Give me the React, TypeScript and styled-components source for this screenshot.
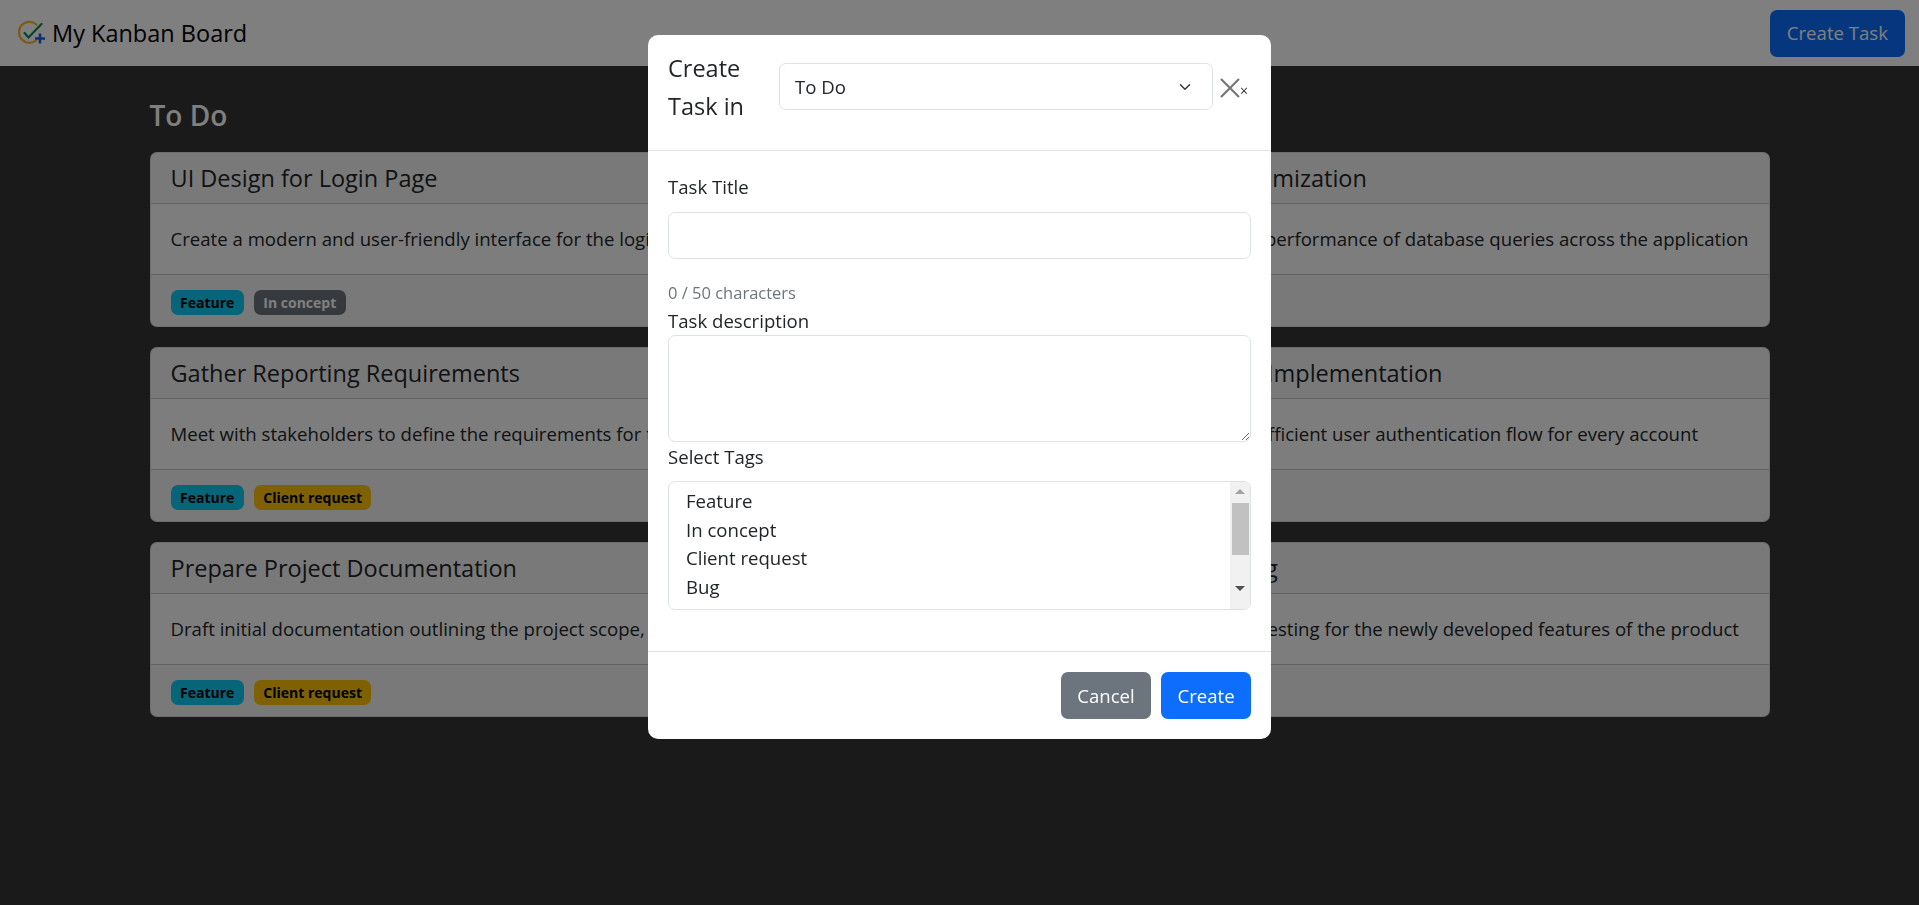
import React from "react";
import styled, { createGlobalStyle } from "styled-components";

const GlobalStyle = createGlobalStyle`
  * {
    box-sizing: border-box;
  }
  html,
  body {
    margin: 0;
    height: 100%;
    overflow: hidden;
    background: #343434;
    color: #212529;
    font-family: "Open Sans", "Noto Sans", sans-serif;
    font-size: 18.6px;
    line-height: 30px;
  }
`;

const Navbar = styled.nav`
  display: flex;
  align-items: center;
  justify-content: space-between;
  height: 66px;
  padding: 0 14px 0 17px;
  background: #fff;
`;

const Brand = styled.div`
  display: flex;
  align-items: center;
  gap: 6px;
  font-size: 23.5px;
  font-weight: 500;
  color: #000;
`;

const PrimaryButton = styled.button`
  height: 47px;
  padding: 0 17px;
  border: 0;
  border-radius: 7px;
  background: #0d6efd;
  color: #fff;
  font: inherit;
`;

const Board = styled.main`
  display: grid;
  grid-template-columns: repeat(3, 1fr);
  gap: 30px;
  width: 1620px;
  margin: 0 auto;
  padding-top: 31px;
`;

const Column = styled.section`
  display: flex;
  flex-direction: column;
  gap: 20px;
`;

const ColumnTitle = styled.h4`
  margin: 0 0 -1px;
  font-size: 28px;
  font-weight: 600;
  line-height: 36px;
  color: #fff;
`;

const Card = styled.article`
  border: 1px solid rgba(0, 0, 0, 0.125);
  border-radius: 7px;
  background: #fafafa;
  overflow: hidden;
`;

const CardHeader = styled.header`
  height: 51px;
  padding: 0 20px;
  border-bottom: 1px solid rgba(0, 0, 0, 0.175);
  background: rgba(0, 0, 0, 0.03);
`;

const CardTitle = styled.h5`
  margin: 0;
  font-size: 23.5px;
  font-weight: 500;
  line-height: 50px;
`;

const CardBody = styled.div`
  padding: 20px;
  white-space: nowrap;
  overflow: hidden;
  text-overflow: ellipsis;
`;

const CardFooter = styled.footer`
  display: flex;
  gap: 10px;
  height: 52px;
  padding-top: 15px;
  padding-left: 20px;
  border-top: 1px solid rgba(0, 0, 0, 0.175);
  background: rgba(0, 0, 0, 0.03);
`;

const badgeColors: Record<string, { bg: string; fg: string }> = {
  info: { bg: "#0dcaf0", fg: "#000" },
  secondary: { bg: "#6c757d", fg: "#fff" },
  warning: { bg: "#ffc107", fg: "#000" },
  danger: { bg: "#dc3545", fg: "#fff" },
};

const Badge = styled.span<{ $tone: string }>`
  height: 25px;
  padding: 0 9.5px;
  border-radius: 7px;
  font-size: 14px;
  font-weight: 700;
  line-height: 25px;
  background: ${(p) => badgeColors[p.$tone].bg};
  color: ${(p) => badgeColors[p.$tone].fg};
`;

const Backdrop = styled.div`
  position: fixed;
  inset: 0;
  background: rgba(0, 0, 0, 0.5);
`;

const Modal = styled.div`
  width: 623px;
  height: 704px;
  margin: 35px auto 0;
  border-radius: 10px;
  background: #fff;
  overflow: hidden;
`;

const ModalHeader = styled.div`
  display: flex;
  align-items: center;
  height: 116px;
  padding: 0 22px 12px 20px;
  border-bottom: 1px solid #dee2e6;
`;

const ModalTitle = styled.h5`
  flex: none;
  width: 111px;
  margin: 0;
  font-size: 23.5px;
  font-weight: 500;
  line-height: 38px;
`;

const ColumnSelect = styled.select`
  flex: 1;
  min-width: 0;
  height: 47px;
  padding: 0 15px;
  border: 1px solid #dee2e6;
  border-radius: 7px;
  color: #212529;
  font: inherit;
  appearance: none;
  background: #fff
    url("data:image/svg+xml,%3csvg xmlns='http://www.w3.org/2000/svg' viewBox='0 0 16 16'%3e%3cpath fill='none' stroke='%23343a40' stroke-linecap='round' stroke-linejoin='round' stroke-width='2' d='m2 5 6 6 6-6'/%3e%3c/svg%3e")
    no-repeat right 19px center / 16px 12px;
`;

const CloseButton = styled.button`
  display: flex;
  align-items: flex-end;
  flex: none;
  width: 29px;
  height: 22px;
  margin-left: 7px;
  padding: 0;
  border: 0;
  background: none;
  color: #333;
  font: 14px/14px "Open Sans", sans-serif;
`;

const ModalBody = styled.div`
  display: flex;
  flex-direction: column;
  height: 500px;
  padding: 21px 20px 0;
`;

const FieldLabel = styled.label`
  display: block;
  color: #212529;
`;

const TitleInput = styled.input`
  display: block;
  width: 100%;
  height: 47px;
  margin-top: 10px;
  border: 1px solid #dee2e6;
  border-radius: 7px;
  outline: 0;
`;

const CharCount = styled.small`
  display: block;
  margin-top: 21px;
  color: #6c757d;
  font-size: 16.5px;
  line-height: 26px;
`;

const DescriptionInput = styled.textarea`
  display: block;
  width: 100%;
  height: 107px;
  margin-top: -1px;
  border: 1px solid #dee2e6;
  border-radius: 7px;
  outline: 0;
`;

const TagBox = styled.div`
  display: flex;
  height: 129px;
  margin-top: 9px;
  border: 1px solid #dee2e6;
  border-radius: 7px;
  overflow: hidden;
`;

const TagList = styled.ul`
  flex: 1;
  margin: 0;
  padding: 5px 0 0 17px;
  list-style: none;
`;

const TagOption = styled.li`
  height: 28.6px;
  line-height: 28.6px;
`;

const Scrollbar = styled.div`
  display: flex;
  flex: none;
  flex-direction: column;
  align-items: center;
  width: 20px;
  padding-top: 21px;
  background: #f1f1f1;
`;

const ScrollArrow = styled.span<{ $down?: boolean }>`
  position: relative;
  top: ${(p) => (p.$down ? "31px" : "-14px")};
  width: 0;
  height: 0;
  margin-bottom: ${(p) => (p.$down ? "0" : "-5px")};
  border-right: 5px solid transparent;
  border-left: 5px solid transparent;
  border-top: ${(p) => (p.$down ? "5px solid #505050" : "0")};
  border-bottom: ${(p) => (p.$down ? "0" : "5px solid #a3a3a3")};
`;

const ScrollThumb = styled.div`
  flex: none;
  width: 17px;
  height: 52px;
  background: #c1c1c1;
`;

const ModalFooter = styled.div`
  display: flex;
  justify-content: flex-end;
  gap: 10px;
  padding: 20px;
  border-top: 1px solid #dee2e6;
`;

const ModalButton = styled.button<{ $primary?: boolean }>`
  width: 90px;
  height: 47px;
  border: 0;
  border-radius: 7px;
  background: ${(p) => (p.$primary ? "#0d6efd" : "#6c757d")};
  color: #fff;
  font: inherit;
`;

type Task = {
  title: string;
  description: string;
  tags: [string, string][];
};

const todo: Task[] = [
  {
    title: "UI Design for Login Page",
    description:
      "Create a modern and user-friendly interface for the login page of the application",
    tags: [
      ["Feature", "info"],
      ["In concept", "secondary"],
    ],
  },
  {
    title: "Gather Reporting Requirements",
    description:
      "Meet with stakeholders to define the requirements for the new reporting module",
    tags: [
      ["Feature", "info"],
      ["Client request", "warning"],
    ],
  },
  {
    title: "Prepare Project Documentation",
    description:
      "Draft initial documentation outlining the project scope, goals and timeline",
    tags: [
      ["Feature", "info"],
      ["Client request", "warning"],
    ],
  },
];

const done: Task[] = [
  {
    title: "Database Query Optimization",
    description:
      "Analyze and optimize the performance of database queries across the application",
    tags: [
      ["Bug", "info"],
      ["Urgent", "danger"],
    ],
  },
  {
    title: "User Authentication Implementation",
    description:
      "Implement a secure and efficient user authentication flow for every account",
    tags: [["Feature", "info"]],
  },
  {
    title: "Initial Feature Testing",
    description:
      "Conduct initial rounds of testing for the newly developed features of the product",
    tags: [
      ["Feature", "info"],
      ["Shelved", "secondary"],
    ],
  },
];

function Logo() {
  return (
    <svg width="29" height="26" viewBox="0 0 29 26" fill="none" aria-hidden={true}>
      <path
        d="M19.5 4.5A10.5 10.5 0 1 0 19 20.5"
        stroke="#f2b632"
        strokeWidth="2.2"
        strokeLinecap="round"
      />
      <path d="M7.5 13l4 4.5L24.5 4" stroke="#0f8a4f" strokeWidth="2.2" strokeLinecap="round" />
      <path d="M23 13.5v10M18 18.5h10" stroke="#1f5fe0" strokeWidth="2.6" />
    </svg>
  );
}

function TaskCard({ task }: { task: Task }) {
  return (
    <Card>
      <CardHeader>
        <CardTitle>{task.title}</CardTitle>
      </CardHeader>
      <CardBody>{task.description}</CardBody>
      <CardFooter>
        {task.tags.map(([label, tone]) => (
          <Badge key={label} $tone={tone}>
            {label}
          </Badge>
        ))}
      </CardFooter>
    </Card>
  );
}

export default function App() {
  return (
    <>
      <GlobalStyle />
      <Navbar>
        <Brand>
          <Logo />
          My Kanban Board
        </Brand>
        <PrimaryButton>Create Task</PrimaryButton>
      </Navbar>
      <Board>
        <Column>
          <ColumnTitle>To Do</ColumnTitle>
          {todo.map((task) => (
            <TaskCard key={task.title} task={task} />
          ))}
        </Column>
        <Column />
        <Column>
          <ColumnTitle>Done</ColumnTitle>
          {done.map((task) => (
            <TaskCard key={task.title} task={task} />
          ))}
        </Column>
      </Board>
      <Backdrop>
        <Modal>
          <ModalHeader>
            <ModalTitle>Create Task in</ModalTitle>
            <ColumnSelect defaultValue="To Do">
              <option>To Do</option>
              <option>In Progress</option>
              <option>Done</option>
            </ColumnSelect>
            <CloseButton aria-label="Close">
              <svg width="20" height="20" viewBox="0 0 20 20" aria-hidden={true}>
                <path d="M1 1l18 18M19 1L1 19" stroke="#777" strokeWidth="2.2" />
              </svg>
              ×
            </CloseButton>
          </ModalHeader>
          <ModalBody>
            <FieldLabel>Task Title</FieldLabel>
            <TitleInput />
            <CharCount>0 / 50 characters</CharCount>
            <FieldLabel>Task description</FieldLabel>
            <DescriptionInput />
            <FieldLabel>Select Tags</FieldLabel>
            <TagBox>
              <TagList>
                <TagOption>Feature</TagOption>
                <TagOption>In concept</TagOption>
                <TagOption>Client request</TagOption>
                <TagOption>Bug</TagOption>
              </TagList>
              <Scrollbar>
                <ScrollArrow />
                <ScrollThumb />
                <ScrollArrow $down />
              </Scrollbar>
            </TagBox>
          </ModalBody>
          <ModalFooter>
            <ModalButton>Cancel</ModalButton>
            <ModalButton $primary>Create</ModalButton>
          </ModalFooter>
        </Modal>
      </Backdrop>
    </>
  );
}
